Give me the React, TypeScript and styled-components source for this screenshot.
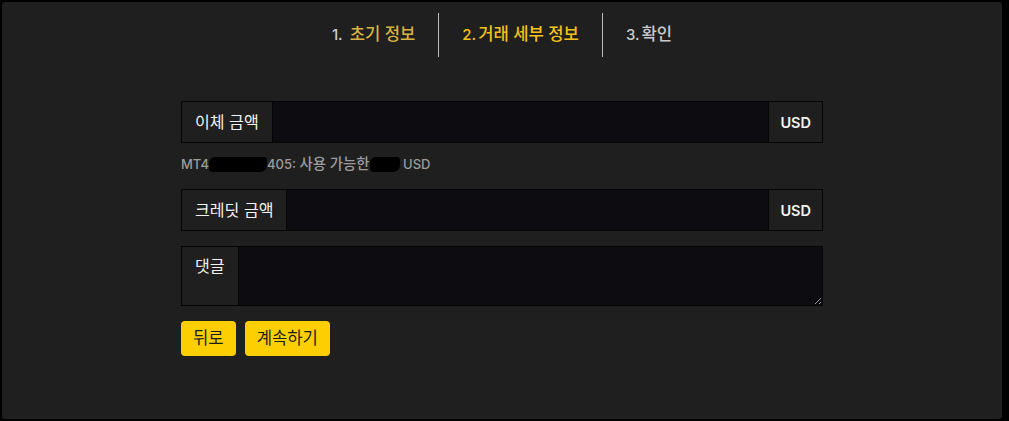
import React from "react";
import styled, { createGlobalStyle } from "styled-components";

const Global = createGlobalStyle`
  html, body { margin: 0; padding: 0; background: #000; }
  body { font-family: Inter, "Noto Sans CJK KR", sans-serif; }
  * { box-sizing: border-box; }
`;

const Frame = styled.div`
  width: 1009px;
  height: 421px;
  padding: 2px 7px 2px 2px;
  background: #000;
`;

const Panel = styled.div`
  width: 1000px;
  height: 417px;
  background: #1f1f1f;
  border-radius: 3px;
  display: flex;
  flex-direction: column;
  align-items: center;
`;

const Steps = styled.div`
  display: flex;
  margin-top: 11px;
  height: 44px;
`;

const Step = styled.div<{ $first?: boolean }>`
  display: flex;
  align-items: center;
  padding: 0 23px 2px;
  border-left: ${(p) => (p.$first ? "none" : "1px solid #bdbdbd")};
  font-size: 15px;
  font-weight: 500;
  white-space: pre;
`;

const Num = styled.span<{ $c: string; $gap: number }>`
  color: ${(p) => p.$c};
  margin-right: ${(p) => p.$gap}px;
`;

const Ko = styled.span<{ $c?: string }>`
  font-size: 1.11em;
  line-height: 1;
  color: ${(p) => p.$c ?? "inherit"};
`;

const Form = styled.div`
  width: 642px;
  margin-top: 44px;
  display: flex;
  flex-direction: column;
`;

const Group = styled.div<{ $h: number; $mt?: number }>`
  display: flex;
  height: ${(p) => p.$h}px;
  margin-top: ${(p) => p.$mt ?? 0}px;
  border: 1px solid #050505;
`;

const Label = styled.div<{ $top?: boolean }>`
  display: flex;
  align-items: ${(p) => (p.$top ? "flex-start" : "center")};
  padding: ${(p) => (p.$top ? "11px 13px 0 13px" : "0 13px")};
  background: #1f1f1f;
  border-right: 1px solid #050505;
  color: #f2f2f2;
  font-size: 14.5px;
  white-space: nowrap;
`;

const Input = styled.input`
  flex: 1;
  min-width: 0;
  background: #0d0d11;
  border: none;
  outline: none;
  color: #fff;
`;

const TextArea = styled.textarea`
  flex: 1;
  min-width: 0;
  background: #0d0d11;
  border: none;
  outline: none;
  color: #fff;
  resize: vertical;
`;

const Addon = styled.div`
  display: flex;
  align-items: center;
  padding: 0 11px;
  background: #1f1f1f;
  border-left: 1px solid #050505;
  color: #f2f2f2;
  font-size: 14.5px;
  font-weight: 600;
`;

const Help = styled.div`
  display: flex;
  align-items: center;
  height: 20px;
  margin-top: 11px;
  color: #9c9c9c;
  font-size: 13px;
  font-weight: 500;
  white-space: pre;
`;

const Redact = styled.span<{ $w: number }>`
  display: inline-block;
  width: ${(p) => p.$w}px;
  height: 15px;
  background: #000;
  border-radius: 6px 3px 7px 4px;
`;

const Buttons = styled.div`
  display: flex;
  gap: 9px;
  margin-top: 15px;
`;

const Button = styled.button`
  height: 35px;
  padding: 0 12px;
  background: #fdcf00;
  color: #1c1c1c;
  border: none;
  border-radius: 4px;
  font-family: Inter, "Noto Sans CJK KR", sans-serif;
  font-size: 15px;
`;

export default function App() {
  return (
    <>
      <Global />
      <Frame>
        <Panel>
          <Steps>
            <Step $first>
              <Num $c="#c9ced4" $gap={7}>1.</Num>
              <Ko $c="#d7b33f">초기 정보</Ko>
            </Step>
            <Step>
              <Num $c="#f2c21b" $gap={2}>2.</Num>
              <Ko $c="#f2c21b">거래 세부 정보</Ko>
            </Step>
            <Step>
              <Num $c="#c9c9c9" $gap={2}>3.</Num>
              <Ko $c="#c9c9c9">확인</Ko>
            </Step>
          </Steps>
          <Form>
            <Group $h={42}>
              <Label><Ko>이체 금액</Ko></Label>
              <Input />
              <Addon>USD</Addon>
            </Group>
            <Help>
              MT4<Redact $w={58} />405: <Ko>사용 가능한</Ko><Redact $w={30} /> USD
            </Help>
            <Group $h={42} $mt={15}>
              <Label><Ko>크레딧 금액</Ko></Label>
              <Input />
              <Addon>USD</Addon>
            </Group>
            <Group $h={60} $mt={15}>
              <Label $top><Ko>댓글</Ko></Label>
              <TextArea />
            </Group>
            <Buttons>
              <Button><Ko>뒤로</Ko></Button>
              <Button><Ko>계속하기</Ko></Button>
            </Buttons>
          </Form>
        </Panel>
      </Frame>
    </>
  );
}
